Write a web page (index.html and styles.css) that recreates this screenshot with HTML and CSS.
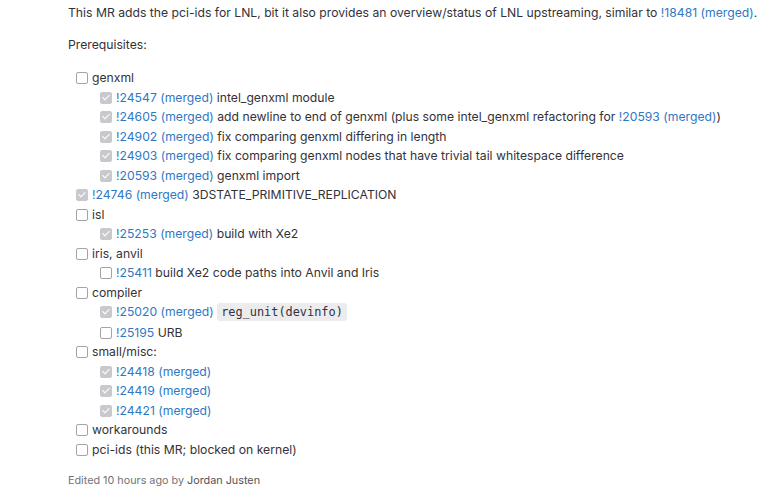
FILE: index.html
```html
<!DOCTYPE html>
<html>
<head>
<meta charset="utf-8">
<link rel="stylesheet" href="styles.css">
</head>
<body>
<div class="note">
  <p class="intro">This MR adds the pci-ids for LNL, bit it also provides an overview/status of LNL upstreaming, similar to <a class="ref">!18481 (merged)</a>.</p>
  <p class="para">Prerequisites:</p>
  <ul class="tasks">
    <li><span class="cb"></span>genxml
      <ul class="tasks">
        <li><span class="cb done"></span><a class="ref">!24547 (merged)</a> intel_genxml module</li>
        <li><span class="cb done"></span><a class="ref">!24605 (merged)</a> add newline to end of genxml (plus some intel_genxml refactoring for <a class="ref">!20593 (merged)</a>)</li>
        <li><span class="cb done"></span><a class="ref">!24902 (merged)</a> fix comparing genxml differing in length</li>
        <li><span class="cb done"></span><a class="ref">!24903 (merged)</a> fix comparing genxml nodes that have trivial tail whitespace difference</li>
        <li><span class="cb done"></span><a class="ref">!20593 (merged)</a> genxml import</li>
      </ul>
    </li>
    <li><span class="cb done"></span><a class="ref">!24746 (merged)</a> 3DSTATE_PRIMITIVE_REPLICATION</li>
    <li><span class="cb"></span>isl
      <ul class="tasks">
        <li><span class="cb done"></span><a class="ref">!25253 (merged)</a> build with Xe2</li>
      </ul>
    </li>
    <li><span class="cb"></span>iris, anvil
      <ul class="tasks">
        <li><span class="cb"></span><a class="ref">!25411</a> build Xe2 code paths into Anvil and Iris</li>
      </ul>
    </li>
    <li><span class="cb"></span>compiler
      <ul class="tasks">
        <li><span class="cb done"></span><a class="ref">!25020 (merged)</a> <code class="code">reg_unit(devinfo)</code></li>
        <li><span class="cb"></span><a class="ref">!25195</a> URB</li>
      </ul>
    </li>
    <li><span class="cb"></span>small/misc:
      <ul class="tasks">
        <li><span class="cb done"></span><a class="ref">!24418 (merged)</a></li>
        <li><span class="cb done"></span><a class="ref">!24419 (merged)</a></li>
        <li><span class="cb done"></span><a class="ref">!24421 (merged)</a></li>
      </ul>
    </li>
    <li><span class="cb"></span>workarounds</li>
    <li><span class="cb"></span>pci-ids (this MR; blocked on kernel)</li>
  </ul>
  <p class="edited">Edited 10 hours ago by <span class="author">Jordan Justen</span></p>
</div>
</body>
</html>
```
FILE: styles.css
```css
html, body {
  margin: 0;
  padding: 0;
  background: #ffffff;
}
body {
  font-family: Inter, "Noto Sans", sans-serif;
  font-size: 12.2px;
  color: #333238;
}
.note {
  padding: 3px 0 0 68px;
}
.intro, .para {
  margin: 0 0 12px 0;
  line-height: 19.5px;
  white-space: nowrap;
}
.para {
  margin-bottom: 14px;
}
.ref {
  color: #2f78c4;
  text-decoration: none;
}
.tasks {
  list-style: none;
  margin: 0;
  padding: 0 0 0 8px;
}
.tasks .tasks {
  padding-left: 24px;
}
.tasks li {
  line-height: 19.5px;
  white-space: nowrap;
}
.cb {
  display: inline-block;
  box-sizing: border-box;
  width: 12px;
  height: 12px;
  border: 1px solid #a4a3a8;
  border-radius: 2px;
  background: #fff;
  vertical-align: -2px;
  margin-right: 4px;
  position: relative;
}
.cb.done {
  background: #c9c8cd;
  border-color: #c9c8cd;
}
.cb.done::after {
  content: "";
  position: absolute;
  left: 3px;
  top: 0px;
  width: 3px;
  height: 6px;
  border: solid #fff;
  border-width: 0 1.5px 1.5px 0;
  transform: rotate(45deg);
}
.code {
  font-family: "DejaVu Sans Mono", "Liberation Mono", monospace;
  font-size: 11.9px;
  background: #ececef;
  border-radius: 3px;
  padding: 2px 4px;
  color: #333238;
}
.edited {
  margin: 15px 0 0 0;
  font-size: 10.8px;
  color: #737278;
}
.author {
  color: #535158;
}
```
